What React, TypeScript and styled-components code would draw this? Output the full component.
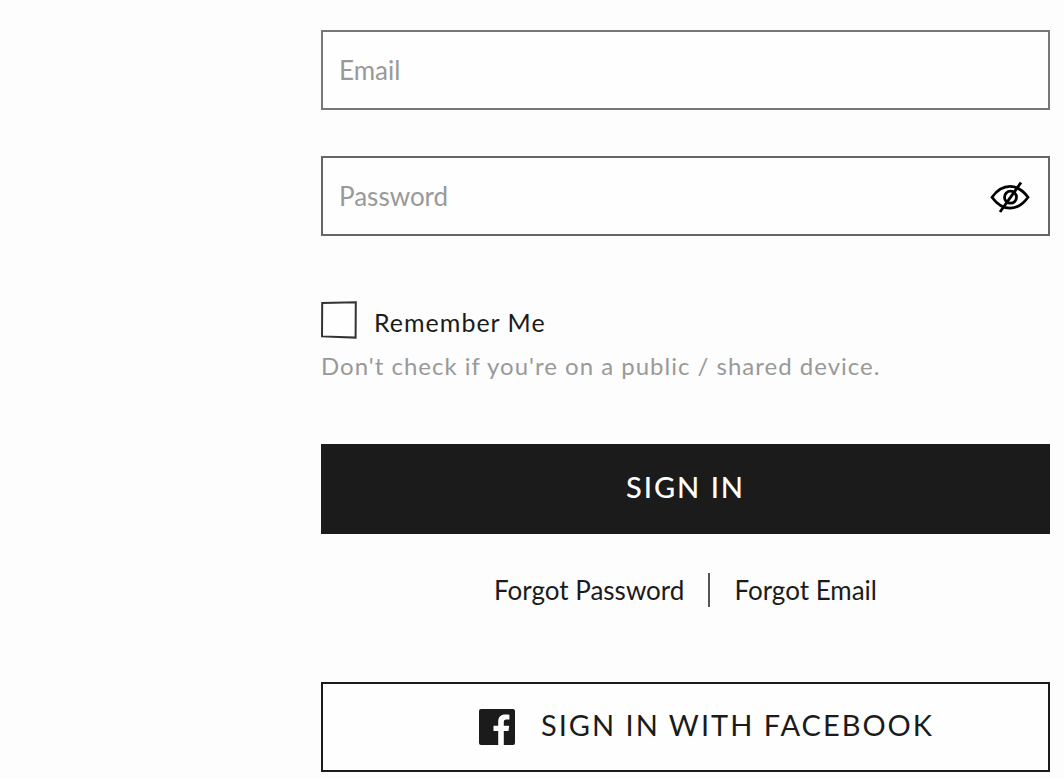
import React, { useState } from "react";
import styled, { createGlobalStyle } from "styled-components";

const GlobalStyle = createGlobalStyle`
  *, *::before, *::after { box-sizing: border-box; }
  body {
    margin: 0;
    background: #fdfdfd;
    color: #1b1b1b;
    font-family: Lato, "Open Sans", sans-serif;
    font-size: 26px;
    line-height: 32px;
  }
`;

const Form = styled.form`
  display: flex;
  flex-direction: column;
  padding: 30px 14px 7px 321px;
`;

const Field = styled.label<{ $tone: string }>`
  display: flex;
  align-items: center;
  height: 80px;
  margin-bottom: 46px;
  padding: 0 18px 0 16px;
  border: 2px solid ${(p) => p.$tone};
  background: #fefefe;
`;

const TextInput = styled.input`
  flex: 1;
  min-width: 0;
  height: 76px;
  padding: 0;
  border: 0;
  outline: 0;
  background: transparent;
  color: #1b1b1b;
  font: inherit;

  &::placeholder {
    color: #999;
    opacity: 1;
  }
`;

const IconButton = styled.button`
  display: flex;
  padding: 0;
  border: 0;
  background: none;
  color: #000;
  cursor: pointer;
`;

const Remember = styled.div`
  display: flex;
  align-items: center;
  gap: 17px;
  height: 38px;
  margin-top: 19px;
`;

const CheckWrap = styled.span`
  display: grid;
  width: 36px;
  height: 38px;

  > * { grid-area: 1 / 1; }
  svg { pointer-events: none; }
`;

const Checkbox = styled.input`
  appearance: none;
  width: 36px;
  height: 38px;
  margin: 0;
  cursor: pointer;
`;

const RememberLabel = styled.label`
  padding-top: 4px;
  font-size: 25px;
  letter-spacing: 1px;
`;

const Hint = styled.p`
  margin: 11px 0 62px;
  color: #999;
  font-size: 24px;
  letter-spacing: 1px;
`;

const ActionButton = styled.button<{ $outlined?: boolean }>`
  display: flex;
  align-items: center;
  justify-content: center;
  gap: 26px;
  width: 100%;
  min-height: 90px;
  padding: 0 0 4px ${(p) => (p.$outlined ? "42px" : "0")};
  border: 2px solid #1b1b1b;
  background: ${(p) => (p.$outlined ? "#fefefe" : "#1b1b1b")};
  color: ${(p) => (p.$outlined ? "#1b1b1b" : "#fff")};
  font: inherit;
  font-size: 29px;
  font-weight: ${(p) => (p.$outlined ? 400 : 500)};
  letter-spacing: 2px;
  cursor: pointer;

  svg { margin-top: 4px; }
`;

const Links = styled.nav`
  display: flex;
  align-items: center;
  justify-content: center;
  gap: 24px;
  margin: 39px 0 75px;
`;

const TextLink = styled.a`
  color: #1b1b1b;
  text-decoration: none;
`;

const Divider = styled.span`
  width: 2px;
  height: 34px;
  background: #555;
`;

function EyeIcon() {
  return (
    <svg width="40" height="34" viewBox="0 -2 40 34" fill="none" stroke="currentColor" strokeWidth="2.8" aria-hidden="true">
      <path d="M2 16.2C7.2 9 13 5.400 20 5.400S32.800 9 38 16.200C32.800 23.400 27 27.200 20 27.200S7.200 23.400 2 16.200Z" />
      <circle cx="20.500" cy="16.200" r="6" />
      <path d="M31 1.500 10 31" />
    </svg>
  );
}

function CheckFrame({ checked }: { checked: boolean }) {
  return (
    <svg width="36" height="38" viewBox="0 0 36 38" fill="none" stroke="#333" strokeWidth="2" aria-hidden="true">
      <path d="M1.200 2 34.800 1.200 34.600 36.600 1 35.400Z" fill="#fefefe" />
      {checked && <path d="m8 19 7 7 13-15" />}
    </svg>
  );
}

function FacebookIcon() {
  return (
    <svg width="36" height="36" viewBox="0 0 36 36" aria-hidden="true">
      <path
        fill="#1b1b1b"
        d="M2 0H34a2 2 0 0 1 2 2V34a2 2 0 0 1-2 2H24.800V22.100H29.500L30.200 16.700H24.800V13.300C24.800 11.700 25.200 10.600 27.500 10.600H30.400V5.700C29.900 5.600 28.200 5.500 26.200 5.500C22 5.500 19.200 8 19.200 12.700V16.700H14.500V22.100H19.200V36H2a2 2 0 0 1-2-2V2A2 2 0 0 1 2 0Z"
      />
    </svg>
  );
}

export default function App() {
  const [visible, setVisible] = useState(false);
  const [checked, setChecked] = useState(false);

  return (
    <>
      <GlobalStyle />
      <Form onSubmit={(e) => e.preventDefault()}>
        <Field $tone="#777" htmlFor="email">
          <TextInput id="email" type="email" placeholder="Email" aria-label="Email" />
        </Field>
        <Field $tone="#666" htmlFor="password">
          <TextInput
            id="password"
            type={visible ? "text" : "password"}
            placeholder="Password"
            aria-label="Password"
          />
          <IconButton type="button" aria-label="Show password" onClick={() => setVisible(!visible)}>
            <EyeIcon />
          </IconButton>
        </Field>
        <Remember>
          <CheckWrap>
            <Checkbox
              id="remember"
              type="checkbox"
              checked={checked}
              onChange={(e) => setChecked(e.target.checked)}
            />
            <CheckFrame checked={checked} />
          </CheckWrap>
          <RememberLabel htmlFor="remember">Remember Me</RememberLabel>
        </Remember>
        <Hint>Don't check if you're on a public / shared device.</Hint>
        <ActionButton type="submit">SIGN IN</ActionButton>
        <Links aria-label="Account recovery">
          <TextLink href="#password">Forgot Password</TextLink>
          <Divider />
          <TextLink href="#email">Forgot Email</TextLink>
        </Links>
        <ActionButton type="button" $outlined>
          <FacebookIcon />
          SIGN IN WITH FACEBOOK
        </ActionButton>
      </Form>
    </>
  );
}
